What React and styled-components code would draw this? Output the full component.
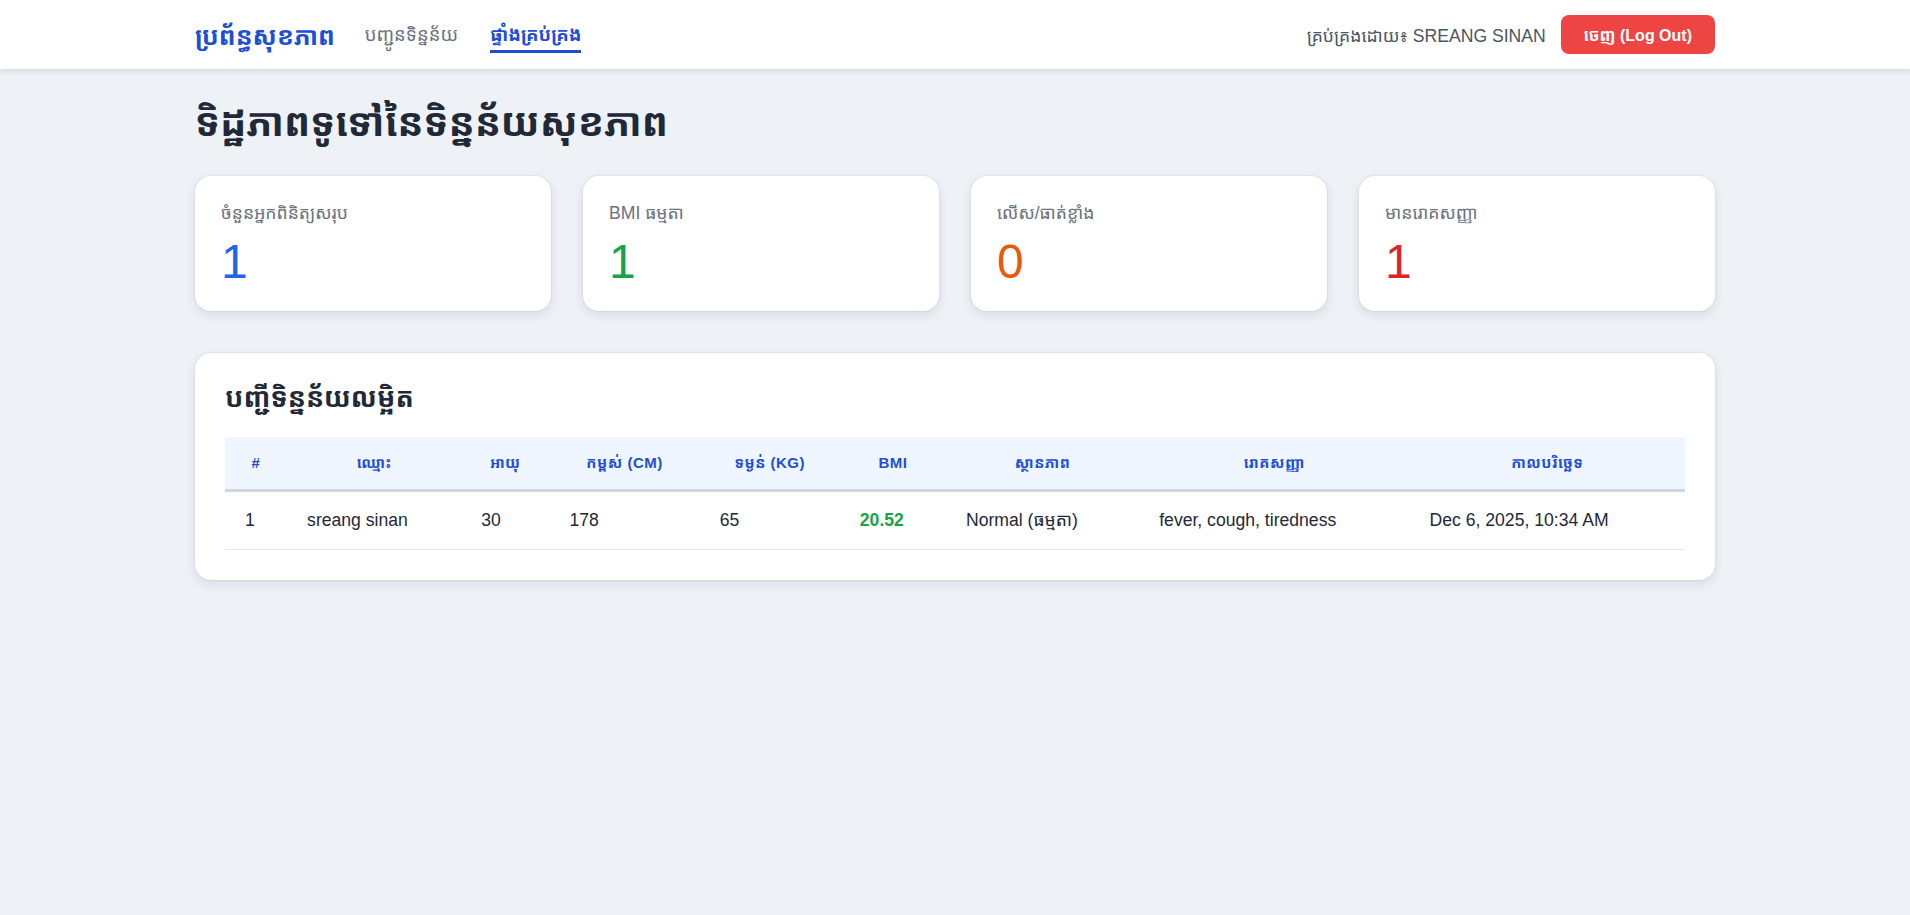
import React from "react";
import styled, { createGlobalStyle } from "styled-components";

const GlobalStyle = createGlobalStyle`
  * {
    box-sizing: border-box;
  }
  body {
    margin: 0;
    background-color: #eef2f7;
    font-family: "Liberation Sans", "Noto Sans Khmer", "Khmer OS", Arial, sans-serif;
    color: #1f2937;
  }
`;

const Header = styled.header`
  background-color: #ffffff;
  height: 69px;
  box-shadow: 0 2px 6px rgba(15, 23, 42, 0.12);
`;

const HeaderInner = styled.div`
  max-width: 1520px;
  height: 100%;
  margin: 0 auto;
  display: flex;
  align-items: center;
  justify-content: space-between;
`;

const HeaderLeft = styled.div`
  display: flex;
  align-items: center;
  gap: 30px;
`;

const Logo = styled.a`
  font-size: 25px;
  font-weight: 700;
  color: #1d4ed8;
  text-decoration: none;
`;

const Nav = styled.nav`
  display: flex;
  align-items: center;
  gap: 32px;
`;

const NavLink = styled.a`
  font-size: 18.5px;
  color: ${(props) => (props.$active ? "#1d4ed8" : "#6b7280")};
  font-weight: ${(props) => (props.$active ? 700 : 400)};
  text-decoration: none;
  padding: 4px 0;
  border-bottom: 3px solid
    ${(props) => (props.$active ? "#1d4ed8" : "transparent")};
`;

const HeaderRight = styled.div`
  display: flex;
  align-items: center;
  gap: 15px;
`;

const UserText = styled.span`
  font-size: 17.6px;
  color: #4b5563;
`;

const LogoutButton = styled.button`
  background-color: #ef4444;
  color: #ffffff;
  border: none;
  border-radius: 8px;
  height: 39px;
  padding: 0 23px;
  font-family: inherit;
  font-size: 16px;
  font-weight: 700;
  cursor: pointer;
`;

const Main = styled.main`
  max-width: 1520px;
  margin: 0 auto;
  padding: 23px 0 40px;
`;

const PageTitle = styled.h1`
  margin: 0 0 22px;
  font-size: 39px;
  font-weight: 700;
  line-height: 1.6;
  color: #1f2937;
`;

const StatsGrid = styled.div`
  display: grid;
  grid-template-columns: repeat(4, 1fr);
  gap: 32px;
  margin-bottom: 42px;
`;

const StatCard = styled.div`
  background-color: #ffffff;
  border-radius: 16px;
  height: 135px;
  padding: 24px 26px;
  box-shadow: 0 4px 12px rgba(15, 23, 42, 0.1), 0 0 0 1px rgba(15, 23, 42, 0.04);
`;

const StatLabel = styled.div`
  font-size: 17.6px;
  line-height: 1.5;
  color: #6b7280;
`;

const StatValue = styled.div`
  font-size: 48px;
  line-height: 1.2;
  margin-top: 6px;
  color: ${(props) => props.$color};
`;

const TableCard = styled.section`
  background-color: #ffffff;
  border-radius: 16px;
  padding: 24px 30px 30px;
  box-shadow: 0 4px 12px rgba(15, 23, 42, 0.1), 0 0 0 1px rgba(15, 23, 42, 0.04);
`;

const TableTitle = styled.h2`
  margin: 0 0 16px;
  font-size: 27px;
  font-weight: 700;
  line-height: 1.6;
  color: #1f2937;
`;

const Table = styled.table`
  width: 100%;
  table-layout: fixed;
  border-collapse: collapse;
`;

const Th = styled.th`
  width: ${(props) => props.$w}px;
  background-color: #eff6ff;
  color: #1d4ed8;
  font-size: 15px;
  font-weight: 700;
  letter-spacing: 0.5px;
  text-transform: uppercase;
  text-align: center;
  padding: 15px 20px;
  line-height: 22px;
  border-bottom: 3px solid #cfd6e2;
`;

const Td = styled.td`
  font-size: 17.6px;
  color: ${(props) => (props.$bmi ? "#16a34a" : "#1f2937")};
  font-weight: ${(props) => (props.$bmi ? 700 : 400)};
  text-align: left;
  padding: 16px 20px;
  line-height: 25px;
  border-bottom: 1px solid #e5e7eb;
`;

const stats = [
  { label: "ចំនួនអ្នកពិនិត្យសរុប", value: 1, color: "#2563eb" },
  { label: "BMI ធម្មតា", value: 1, color: "#16a34a" },
  { label: "លើស/ធាត់ខ្លាំង", value: 0, color: "#ea580c" },
  { label: "មានរោគសញ្ញា", value: 1, color: "#dc2626" },
];

const columns = [
  { title: "#", w: 62 },
  { title: "ឈ្មោះ", w: 174 },
  { title: "អាយុ", w: 88 },
  { title: "កម្ពស់ (cm)", w: 150 },
  { title: "ទម្ងន់ (kg)", w: 140 },
  { title: "BMI", w: 106 },
  { title: "ស្ថានភាព", w: 193 },
  { title: "រោគសញ្ញា", w: 270 },
  { title: "កាលបរិច្ឆេទ", w: 275 },
];

const records = [
  {
    id: 1,
    name: "sreang sinan",
    age: 30,
    height: 178,
    weight: 65,
    bmi: "20.52",
    status: "Normal (ធម្មតា)",
    symptoms: "fever, cough, tiredness",
    date: "Dec 6, 2025, 10:34 AM",
  },
];

const App = () => {
  return (
    <>
      <GlobalStyle />
      <Header>
        <HeaderInner>
          <HeaderLeft>
            <Logo href="#">ប្រព័ន្ធសុខភាព</Logo>
            <Nav>
              <NavLink href="#">បញ្ជូនទិន្នន័យ</NavLink>
              <NavLink href="#" $active>
                ផ្ទាំងគ្រប់គ្រង
              </NavLink>
            </Nav>
          </HeaderLeft>
          <HeaderRight>
            <UserText>គ្រប់គ្រងដោយ៖ SREANG SINAN</UserText>
            <LogoutButton>ចេញ (Log Out)</LogoutButton>
          </HeaderRight>
        </HeaderInner>
      </Header>

      <Main>
        <PageTitle>ទិដ្ឋភាពទូទៅនៃទិន្នន័យសុខភាព</PageTitle>

        <StatsGrid>
          {stats.map((s) => (
            <StatCard key={s.label}>
              <StatLabel>{s.label}</StatLabel>
              <StatValue $color={s.color}>{s.value}</StatValue>
            </StatCard>
          ))}
        </StatsGrid>

        <TableCard>
          <TableTitle>បញ្ជីទិន្នន័យលម្អិត</TableTitle>
          <Table>
            <thead>
              <tr>
                {columns.map((c) => (
                  <Th key={c.title} $w={c.w}>
                    {c.title}
                  </Th>
                ))}
              </tr>
            </thead>
            <tbody>
              {records.map((r) => (
                <tr key={r.id}>
                  <Td>{r.id}</Td>
                  <Td>{r.name}</Td>
                  <Td>{r.age}</Td>
                  <Td>{r.height}</Td>
                  <Td>{r.weight}</Td>
                  <Td $bmi>{r.bmi}</Td>
                  <Td>{r.status}</Td>
                  <Td>{r.symptoms}</Td>
                  <Td>{r.date}</Td>
                </tr>
              ))}
            </tbody>
          </Table>
        </TableCard>
      </Main>
    </>
  );
};

export default App;
